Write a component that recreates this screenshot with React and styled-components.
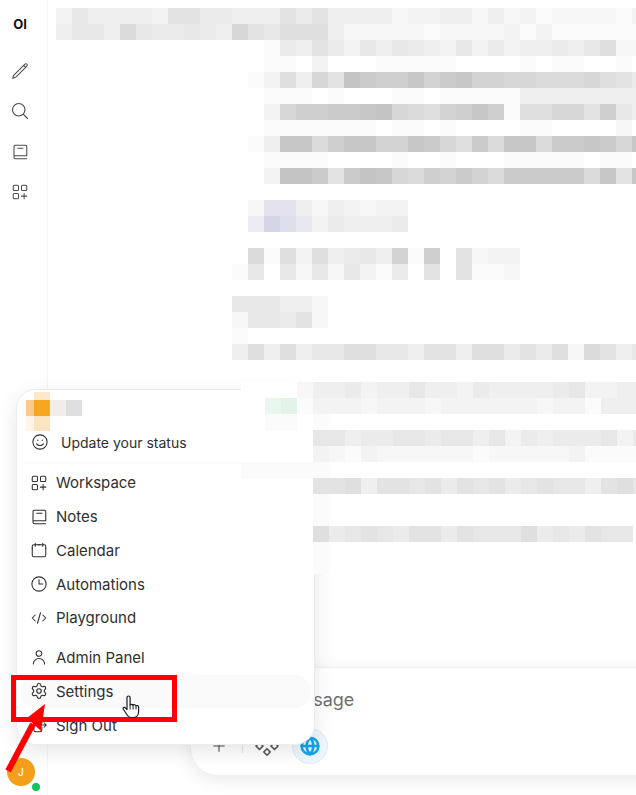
import React from "react";
import styled, { createGlobalStyle } from "styled-components";
import { Globe, Plus, Settings } from "lucide-react";

const GlobalStyle = createGlobalStyle`
  html, body {
    margin: 0;
    background: #fff;
    font-family: Inter, "Noto Sans", sans-serif;
    color: #2f2f2f;
  }
`;

// blurred chat text: every char is one 16px mosaic tile, hex digit = grey step
const TINTS = {
  v: "#e3e2ee",
  u: "#edecf3",
  w: "#d5d5e8",
  x: "#dfdfec",
  y: "#e9e8f0",
  g: "#e8f8ef",
  h: "#e2f4ea",
};

function tileColor(ch) {
  if (TINTS[ch]) return TINTS[ch];
  const grey = 255 - parseInt(ch, 16) * 4;
  return `rgb(${grey},${grey},${grey})`;
}

const upperRows = [
  [0, "36444437755444757" + "44442334424231222213"],
  [0, "46649655654a76888" + "42222212222313111111"],
  [13, "1547" + "53646543635344546822"],
  [13, "1103" + "00011111000010110010"],
  [12, "1384a" + "7fdccebdebbaa999a875"],
  [13, "1110" + "10001101111144444444"],
  [13, "3acc" + "ddefa98bcec188aa7c64"],
  [13, "1111" + "11101101000011000020"],
  [12, "14ee9" + "ceebbeda8d9ee9ddedae"],
  [13, "1111" + "00001001000111110110"],
  [13, "3ffd" + "7dfea9cbdb9ddddd9e7e"],
  [0, ""],
  [12, "2vv42" + "43233"],
  [12, "uwxy3" + "54445"],
  [0, ""],
  [12, "9183" + "84564b1c07233"],
  [11, "160626" + "263150707112"],
  [0, ""],
  [11, "666442"],
  [11, "266572"],
  [11, "1"],
  [11, "48484668866477488575829746"],
];

const lowerRows = [
  [0, "00002" + "445344644354444563344"],
  [0, "00gh1" + "333233323333332331444"],
  [0, "00110" + "1"],
  [0, "00000" + "664556656646354555635"],
  [0, "00000" + "321322222212222231111"],
  [0, "11111" + "1"],
  [5, "778477675767567664786"],
  [5, "1"],
  [5, "1"],
  [5, "85676577576668565766"],
  [5, "1"],
  [5, "1"],
];

const Page = styled.div`
  position: relative;
  display: flex;
  width: 636px;
  height: 795px;
  overflow: hidden;
  background: #fff;
`;

const Sidebar = styled.aside`
  display: flex;
  flex-direction: column;
  flex: none;
  width: 48px;
  height: 100%;
  box-sizing: border-box;
  border-right: 1px solid #f5f5f5;
  padding-top: 16px;
`;

const Logo = styled.div`
  width: 40px;
  height: 16px;
  line-height: 16px;
  text-align: center;
  font-size: 13px;
  font-weight: 700;
  color: #111;
  margin-bottom: 19px;
`;

const SideButton = styled.div`
  display: flex;
  align-items: center;
  justify-content: center;
  width: 40px;
  height: 40.3px;
  color: #4b4b4b;
`;

const Avatar = styled.div`
  position: relative;
  display: flex;
  align-items: center;
  justify-content: center;
  width: 28px;
  height: 28px;
  margin: auto 0 9px 7px;
  border-radius: 50%;
  background: #f59e1b;
  color: #fff;
  font-size: 10px;
  font-weight: 500;
`;

const StatusDot = styled.span`
  position: absolute;
  right: -5px;
  bottom: -5px;
  width: 8px;
  height: 8px;
  border-radius: 50%;
  background: #10c45c;
`;

const Main = styled.main`
  display: flex;
  flex-direction: column;
  flex: 1;
  min-width: 0;
  padding-top: 8px;
`;

const TileRow = styled.div`
  display: flex;
  height: 16px;
  padding-left: ${(p) => p.$indent * 16}px;
`;

const Tile = styled.i`
  flex: none;
  width: 16px;
  height: 16px;
  background: ${(p) => tileColor(p.$ch)};
`;

const UpperMosaic = styled.div`
  margin-left: 8px;
  width: 600px;
`;

// sits over the account menu, the blur in the screenshot covers its corner
const LowerMosaic = styled.div`
  position: relative;
  z-index: 3;
  margin: 22px 0 0 193px;
  width: 395px;
  overflow: hidden;

  ${TileRow} {
    margin-left: -8px;
  }
`;

const Composer = styled.section`
  display: flex;
  flex-direction: column;
  flex: none;
  box-sizing: border-box;
  height: 109px;
  width: 480px;
  margin: auto 0 19px 142px;
  padding: 20px 0 0 19px;
  border: 1px solid #f1f1f1;
  border-radius: 28px;
  background: #fff;
  box-shadow: 0 4px 18px rgba(0, 0, 0, 0.09);
`;

const Placeholder = styled.div`
  height: 24px;
  line-height: 24px;
  padding-left: 3px;
  font-size: 18px;
  color: #6f6f6f;
`;

const ComposerTools = styled.div`
  display: flex;
  align-items: center;
  margin-top: 16px;
  color: #555;
`;

const ToolDivider = styled.span`
  width: 1px;
  height: 14px;
  margin: 0 12px 0 14px;
  background: #e6e6e6;
`;

const GlobeButton = styled.span`
  display: flex;
  align-items: center;
  justify-content: center;
  width: 36px;
  height: 36px;
  box-sizing: border-box;
  margin-left: 13px;
  border: 1px solid #d8ecfa;
  border-radius: 50%;
  background: #edf6fd;
  color: #0ea5e9;
`;

const Menu = styled.nav`
  position: absolute;
  z-index: 2;
  left: 16px;
  top: 389px;
  display: flex;
  flex-direction: column;
  box-sizing: border-box;
  width: 299px;
  height: 356px;
  padding: 2px 3px;
  border: 1px solid #ececec;
  border-radius: 20px;
  background: #fff;
  box-shadow: 0 6px 20px rgba(0, 0, 0, 0.1);
`;

const NameBlur = styled.div`
  display: grid;
  grid-template-columns: 8px 16px 16px 16px;
  grid-template-rows: 8px 16px 15px;
  margin-left: 6px;
`;

const NameTile = styled.i`
  background: ${(p) => p.$color};
`;

const StatusRow = styled.div`
  display: flex;
  align-items: center;
  gap: 12px;
  height: 24px;
  padding-left: 11px;
  font-size: 14px;
`;

const MenuDivider = styled.div`
  height: 1px;
  margin: 10px 0 2px;
  background: #fcfcfc;
`;

const MenuGroup = styled.div`
  display: flex;
  flex-direction: column;
  margin-bottom: ${(p) => p.$gap || 0}px;
`;

const MenuItem = styled.div`
  display: flex;
  align-items: center;
  gap: 8px;
  height: 33.75px;
  padding-left: 10px;
  border-radius: 16px;
  font-size: 15px;
  background: ${(p) => (p.$active ? "#fafafa" : "transparent")};
`;

const Highlight = styled.div`
  position: absolute;
  z-index: 4;
  left: 11px;
  top: 675px;
  width: 166px;
  height: 47px;
  box-sizing: border-box;
  border: 5px solid #f00;
`;

const Overlay = styled.svg`
  position: absolute;
  z-index: 5;
  left: ${(p) => p.$left}px;
  top: ${(p) => p.$top}px;
`;

const Stroke = ({ children, size = 18, width = 1.4 }) => (
  <svg
    width={size}
    height={size}
    viewBox="0 0 24 24"
    fill="none"
    stroke="currentColor"
    strokeWidth={width}
    strokeLinecap="round"
    strokeLinejoin="round"
    style={{ flex: "none" }}
  >
    {children}
  </svg>
);

const PencilIcon = () => (
  <Stroke>
    <path d="m16.862 4.487 1.687-1.688a1.875 1.875 0 1 1 2.652 2.652L6.832 19.82a4.5 4.5 0 0 1-1.897 1.13l-2.685.8.8-2.685a4.5 4.5 0 0 1 1.13-1.897L16.863 4.487Zm0 0L19.5 7.125" />
  </Stroke>
);
const SearchIcon = () => (
  <Stroke size={20}>
    <path d="m21 21-5.197-5.197m0 0A7.5 7.5 0 1 0 5.196 5.196a7.5 7.5 0 0 0 10.607 10.607Z" />
  </Stroke>
);
const NotesIcon = () => (
  <Stroke>
    <path d="M4 18V4.5A1.5 1.5 0 0 1 5.5 3h14A1.5 1.5 0 0 1 21 4.5V17H5.5A1.8 1.8 0 0 0 4 18Zm0 0v1a2 2 0 0 0 2 2h15M9 7h7" />
  </Stroke>
);
const AppsIcon = () => (
  <Stroke>
    <rect x="3" y="3" width="7" height="7" rx="1.5" />
    <rect x="14" y="3" width="7" height="7" rx="1.5" />
    <rect x="3" y="14" width="7" height="7" rx="1.5" />
    <path d="M17.5 14v7M14 17.5h7" />
  </Stroke>
);
const SmileIcon = () => (
  <Stroke>
    <circle cx="12" cy="12" r="9.5" />
    <path d="M7.5 14.5c2 3 7 3 9 0M9 9.5v.5M15 9.5v.5" />
  </Stroke>
);
const CalendarIcon = () => (
  <Stroke>
    <rect x="3" y="5" width="18" height="16" rx="2" />
    <path d="M7 3v4M17 3v4M10.5 5h3M3 9.5h0M21 9.5h0" />
  </Stroke>
);
const ClockIcon = () => (
  <Stroke>
    <circle cx="12" cy="12" r="9.5" />
    <path d="M12 6v6h5" />
  </Stroke>
);
const CodeIcon = () => (
  <Stroke>
    <path d="M7 8l-4 4 4 4M17 8l4 4-4 4M14 5l-4 14" />
  </Stroke>
);
const UserIcon = () => (
  <Stroke>
    <path d="M15.75 6a3.75 3.75 0 1 1-7.5 0 3.75 3.75 0 0 1 7.5 0ZM4.501 20.118a7.5 7.5 0 0 1 14.998 0" />
  </Stroke>
);
const SignOutIcon = () => (
  <Stroke>
    <path d="M15.75 9V5.25A2.25 2.25 0 0 0 13.5 3h-6a2.25 2.25 0 0 0-2.25 2.25v13.5A2.25 2.25 0 0 0 7.5 21h6a2.25 2.25 0 0 0 2.25-2.25V15m3 0 3-3m0 0-3-3m3 3H9" />
  </Stroke>
);
const ToolsIcon = () => (
  <Stroke size={24} width={1.6}>
    <path d="M1 12l3.5-3.5L8 12l-3.5 3.5ZM16 12l3.5-3.5L23 12l-3.5 3.5ZM8.8 18l3.2-3.2 3.2 3.2-3.2 3.2Z" />
  </Stroke>
);

function Mosaic({ rows }) {
  return rows.map(([indent, tiles], r) => (
    <TileRow key={r} $indent={indent}>
      {tiles.split("").map((ch, i) => (
        <Tile key={i} $ch={ch} />
      ))}
    </TileRow>
  ));
}

const nameTiles = [
  "#fff", "#fde8c8", "#fff", "#fff",
  "#f8cc88", "#f5a623", "#f1ede8", "#dfdfdf",
  "#fff5ea", "#fde4c0", "#fff", "#fff",
];

export default function App() {
  return (
    <Page>
      <GlobalStyle />
      <Sidebar>
        <Logo>OI</Logo>
        <SideButton><PencilIcon /></SideButton>
        <SideButton><SearchIcon /></SideButton>
        <SideButton><NotesIcon /></SideButton>
        <SideButton><AppsIcon /></SideButton>
        <Avatar>
          J
          <StatusDot />
        </Avatar>
      </Sidebar>

      <Main>
        <UpperMosaic>
          <Mosaic rows={upperRows} />
        </UpperMosaic>
        <LowerMosaic>
          <Mosaic rows={lowerRows} />
        </LowerMosaic>
        <Composer>
          <Placeholder>Send a Message</Placeholder>
          <ComposerTools>
            <Plus size={18} strokeWidth={1.5} />
            <ToolDivider />
            <ToolsIcon />
            <GlobeButton>
              <Globe size={20} strokeWidth={3} />
            </GlobeButton>
          </ComposerTools>
        </Composer>
      </Main>

      <Menu>
        <NameBlur>
          {nameTiles.map((color, i) => (
            <NameTile key={i} $color={color} />
          ))}
        </NameBlur>
        <StatusRow>
          <SmileIcon />
          Update your status
        </StatusRow>
        <MenuDivider />
        <MenuGroup $gap={6}>
          <MenuItem><AppsIcon />Workspace</MenuItem>
          <MenuItem><NotesIcon />Notes</MenuItem>
          <MenuItem><CalendarIcon />Calendar</MenuItem>
          <MenuItem><ClockIcon />Automations</MenuItem>
          <MenuItem><CodeIcon />Playground</MenuItem>
        </MenuGroup>
        <MenuGroup>
          <MenuItem><UserIcon />Admin Panel</MenuItem>
          <MenuItem $active><Settings size={18} strokeWidth={1.5} />Settings</MenuItem>
          <MenuItem><SignOutIcon />Sign Out</MenuItem>
        </MenuGroup>
      </Menu>

      <Highlight />

      <Overlay $left={120} $top={693} width="22" height="28" viewBox="0 0 22 28">
        <path
          d="M8.5 3c1 0 1.6.7 1.6 1.6V12c.4-.8 2.7-1 3 .3.5-.9 2.6-.8 2.9.5.7-.6 2.6-.3 2.6 1.2v4.5c0 3-1.7 6-5 6h-2.5c-2 0-3-1-4-2.5L3.2 16c-.7-1 .8-2.3 2-1.4L7 16.5V4.6C7 3.7 7.6 3 8.5 3Z"
          fill="#fff"
          stroke="#1b1b2a"
          strokeWidth="1.2"
          strokeLinejoin="round"
        />
        <path d="M10.1 12v4.5M13.1 12.3v4.2M16 12.8v3.7" stroke="#1b1b2a" strokeWidth="1" fill="none" />
      </Overlay>

      <Overlay $left={0} $top={695} width="60" height="85" viewBox="0 0 60 85">
        <path d="M8 76 33 29" stroke="#f00" strokeWidth="6" fill="none" />
        <polygon points="45,9 27,23 41,36" fill="#f00" />
      </Overlay>
    </Page>
  );
}
